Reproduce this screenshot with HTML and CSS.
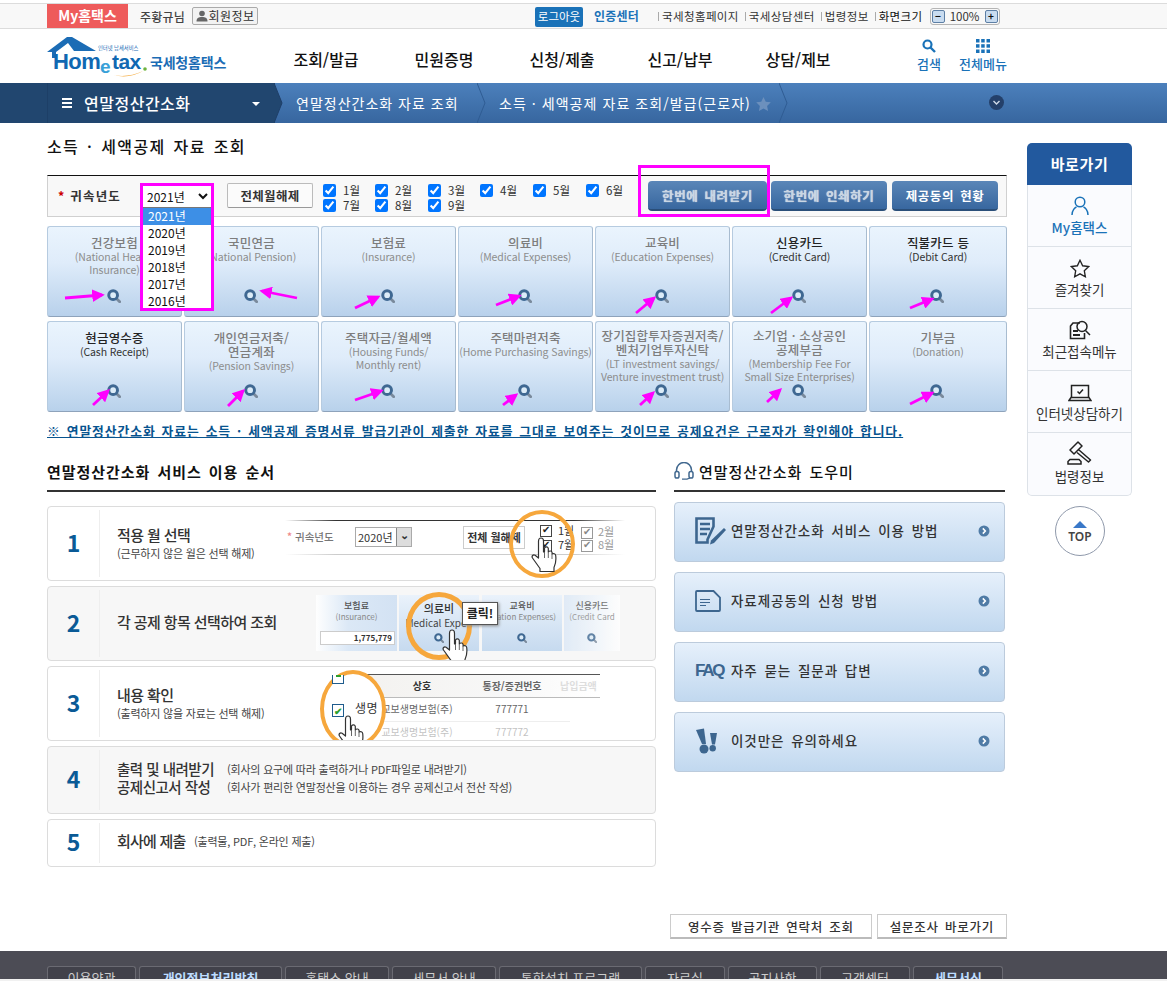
FILE: index.html
```html
<!DOCTYPE html>
<html lang="ko">
<head>
<meta charset="utf-8">
<title>소득·세액공제 자료 조회</title>
<link rel="stylesheet" href="styles.css">
</head>
<body>
<svg class="defs" width="0" height="0" aria-hidden="true">
  <symbol id="lens" viewBox="0 0 16 16">
    <path d="M10.500 10.500l4 4" stroke="#7a8a9c" stroke-width="3.200" stroke-linecap="round"/>
    <circle cx="7" cy="7" r="5" fill="#dcecf8" stroke="#3f6892" stroke-width="3.400"/>
  </symbol>
  <symbol id="hand" viewBox="0 0 30 38">
    <path d="M10 3c1.700 0 2.500 1.200 2.500 3v11l1-.4V13c1-1.600 3.300-1.400 3.800.3v3.500c1.200-1.300 3.300-1 3.800.7v1.500c1.400-.9 3.300-.3 3.600 1.500 .5 4 .2 8-1.700 12v4H9v-3L1.500 23c-1.200-1.700.6-4 2.600-2.800L7.500 23V6c0-1.800 1-3 2.500-3z" fill="#fff" stroke="#333" stroke-width="1.200" stroke-linejoin="round"/>
    <path d="M13.500 17v6M17.300 17v6M21 19v5" stroke="#555" stroke-width=".9" fill="none"/>
  </symbol>
  <symbol id="go" viewBox="0 0 12 12">
    <circle cx="6" cy="6" r="5.500" fill="#4f7ba6"/>
    <path d="M4.800 3.400L7.300 6 4.800 8.600" fill="none" stroke="#fff" stroke-width="1.600"/>
  </symbol>
</svg>

<header class="topbar">
  <div class="wrap topbar-in">
    <a class="my-tab">My홈택스</a>
    <span class="user">주황규님</span>
    <a class="member"><svg width="12" height="12" viewBox="0 0 12 12"><circle cx="6" cy="3.500" r="2.800" fill="#666"/><path d="M.5 11.500c0-3.500 2-4.500 5.500-4.500s5.500 1 5.500 4.500z" fill="#666"/></svg>회원정보</a>
    <div class="util">
      <a class="logout">로그아웃</a>
      <a class="cert">인증센터</a>
      <a class="ulink first">국세청홈페이지</a>
      <a class="ulink">국세상담센터</a>
      <a class="ulink">법령정보</a>
      <a class="ulink strong">화면크기</a>
      <div class="zoomer"><b class="zbtn">−</b><span>100%</span><b class="zbtn">+</b></div>
    </div>
  </div>
</header>

<div class="wrap mainnav">
  <a class="logo">
    <svg width="100" height="44" viewBox="0 0 100 44">
      <path d="M0 15L20 0h5l24 14H27L21 6 9 15v6H5v-6z" fill="#1b6cb5"/>
      <path d="M62 37q17 5 34-3q-15 9-34 3z" fill="#f4a93a"/>
      <text x="51" y="13" class="logo-small">인터넷 납세서비스</text>
      <text x="6" y="32" class="logo-main">Hom</text>
      <text x="53" y="36" class="logo-e">e</text>
      <text x="65" y="32" class="logo-main logo-tax">tax</text>
      <circle cx="98" cy="32" r="1.800" fill="#6fb33f"/>
    </svg>
    <span class="logo-name">국세청홈택스</span>
  </a>
  <nav class="gnb">
    <a>조회/발급</a><a>민원증명</a><a>신청/제출</a><a>신고/납부</a><a>상담/제보</a>
  </nav>
  <div class="navtools">
    <a class="tool tool-search">
      <svg width="14" height="14" viewBox="0 0 14 14"><circle cx="5.500" cy="5.500" r="4" fill="none" stroke="#1a72b8" stroke-width="2.200"/><path d="M8.500 8.500l4.500 4.500" stroke="#1a72b8" stroke-width="2.400"/></svg>
      <span>검색</span>
    </a>
    <a class="tool">
      <svg width="14" height="14" viewBox="0 0 14 14" fill="#1a72b8"><rect width="3.500" height="3.500"/><rect x="5.200" width="3.500" height="3.500"/><rect x="10.500" width="3.500" height="3.500"/><rect y="5.200" width="3.500" height="3.500"/><rect x="5.200" y="5.200" width="3.500" height="3.500"/><rect x="10.500" y="5.200" width="3.500" height="3.500"/><rect y="10.500" width="3.500" height="3.500"/><rect x="5.200" y="10.500" width="3.500" height="3.500"/><rect x="10.500" y="10.500" width="3.500" height="3.500"/></svg>
      <span>전체메뉴</span>
    </a>
  </div>
</div>

<div class="crumbbar">
  <div class="crumb-root">
    <span class="burger"><i></i><i></i><i></i></span>
    <strong>연말정산간소화</strong>
    <span class="caret"></span>
    <svg class="chev chev-root" width="9" height="40" viewBox="0 0 9 40"><path d="M0 0l8 20-8 20z" fill="#21466f"/><path d="M0 0l8 20-8 20" fill="none" stroke="#1e3f68"/></svg>
  </div>
  <a class="crumb crumb-a">연말정산간소화 자료 조회<svg class="chev" width="9" height="40" viewBox="0 0 9 40"><path d="M0 0l8 20-8 20" fill="none" stroke="#2f5c93"/></svg></a>
  <a class="crumb crumb-b">소득 · 세액공제 자료 조회/발급(근로자)
    <svg class="star" width="15" height="14" viewBox="0 0 24 23"><path d="M12 0l3.700 7.800 8.300 1-6.100 5.800 1.600 8.400L12 18.900 4.500 23l1.600-8.400L0 8.800l8.300-1z" fill="#6c90bd"/></svg>
    <svg class="chev" width="9" height="40" viewBox="0 0 9 40"><path d="M0 0l8 20-8 20" fill="none" stroke="#2f5c93"/></svg></a>
  <svg class="crumb-more" width="15" height="15" viewBox="0 0 15 15"><circle cx="7.500" cy="7.500" r="7.500" fill="#24406a"/><path d="M4.500 6l3 3 3-3" fill="none" stroke="#cfd9e6" stroke-width="1.400"/></svg>
</div>

<div class="wrap body-row">
  <main class="content">
    <h1 class="page-title">소득 · 세액공제 자료 조회</h1>

    <section class="filter">
      <label class="year-label"><em>*</em> 귀속년도</label>
      <div class="year-box">
        <select class="year-select"><option>2021년</option></select>
        <ul class="year-list">
          <li class="on">2021년</li><li>2020년</li><li>2019년</li><li>2018년</li><li>2017년</li><li>2016년</li>
        </ul>
      </div>
      <button class="btn-clear">전체월해제</button>
      <div class="months">
        <label><input type="checkbox" checked>1월</label>
        <label><input type="checkbox" checked>2월</label>
        <label><input type="checkbox" checked>3월</label>
        <label><input type="checkbox" checked>4월</label>
        <label><input type="checkbox" checked>5월</label>
        <label><input type="checkbox" checked>6월</label>
        <label><input type="checkbox" checked>7월</label>
        <label><input type="checkbox" checked>8월</label>
        <label><input type="checkbox" checked>9월</label>
      </div>
      <div class="actions">
        <span class="act-box"></span>
        <button class="act dim">한번에 내려받기</button>
        <button class="act dim">한번에 인쇄하기</button>
        <button class="act">제공동의 현황</button>
      </div>
    </section>

    <section class="cards">
      <a class="card dim"><b>건강보험</b><span>(National Health<br>Insurance)</span><svg class="lens"><use href="#lens"/></svg></a>
      <a class="card dim"><b>국민연금</b><span>(National Pension)</span><svg class="lens"><use href="#lens"/></svg></a>
      <a class="card dim"><b>보험료</b><span>(Insurance)</span><svg class="lens"><use href="#lens"/></svg></a>
      <a class="card dim"><b>의료비</b><span>(Medical Expenses)</span><svg class="lens"><use href="#lens"/></svg></a>
      <a class="card dim"><b>교육비</b><span>(Education Expenses)</span><svg class="lens"><use href="#lens"/></svg></a>
      <a class="card"><b>신용카드</b><span>(Credit Card)</span><svg class="lens"><use href="#lens"/></svg></a>
      <a class="card"><b>직불카드 등</b><span>(Debit Card)</span><svg class="lens"><use href="#lens"/></svg></a>
      <a class="card"><b>현금영수증</b><span>(Cash Receipt)</span><svg class="lens"><use href="#lens"/></svg></a>
      <a class="card dim"><b>개인연금저축/<br>연금계좌</b><span>(Pension Savings)</span><svg class="lens"><use href="#lens"/></svg></a>
      <a class="card dim"><b>주택자금/월세액</b><span>(Housing Funds/<br>Monthly rent)</span><svg class="lens"><use href="#lens"/></svg></a>
      <a class="card dim"><b>주택마련저축</b><span>(Home Purchasing Savings)</span><svg class="lens"><use href="#lens"/></svg></a>
      <a class="card dim tight"><b>장기집합투자증권저축/<br>벤처기업투자신탁</b><span>(LT investment savings/<br>Venture investment trust)</span><svg class="lens"><use href="#lens"/></svg></a>
      <a class="card dim tight"><b>소기업 · 소상공인<br>공제부금</b><span>(Membership Fee For<br>Small Size Enterprises)</span><svg class="lens"><use href="#lens"/></svg></a>
      <a class="card dim"><b>기부금</b><span>(Donation)</span><svg class="lens"><use href="#lens"/></svg></a>
      <svg class="arrows" width="960" height="186" viewBox="47 226 960 186">
        <defs><marker id="ah" markerWidth="4.500" markerHeight="4.500" refX="3.500" refY="2.250" orient="auto"><path d="M0 0L4.500 2.250 0 4.500z" fill="#ff00ff"/></marker></defs>
        <g stroke="#ff00ff" stroke-width="2.800" fill="none">
          <path d="M65 298L102 295" marker-end="url(#ah)"/>
          <path d="M297 298L262 291" marker-end="url(#ah)"/>
          <path d="M355 308L378 297" marker-end="url(#ah)"/>
          <path d="M496 305L519 296" marker-end="url(#ah)"/>
          <path d="M636 313L654 298" marker-end="url(#ah)"/>
          <path d="M771 313L791 298" marker-end="url(#ah)"/>
          <path d="M910 308L932 299" marker-end="url(#ah)"/>
          <path d="M93 405L108 391" marker-end="url(#ah)"/>
          <path d="M228 406L243 391" marker-end="url(#ah)"/>
          <path d="M355 400L381 391" marker-end="url(#ah)"/>
          <path d="M503 405L516 395" marker-end="url(#ah)"/>
          <path d="M640 405L653 393" marker-end="url(#ah)"/>
          <path d="M767 402L780 390" marker-end="url(#ah)"/>
          <path d="M910 404L932 393" marker-end="url(#ah)"/>
        </g>
      </svg>
    </section>

    <p class="notice">※ 연말정산간소화 자료는 소득 · 세액공제 증명서류 발급기관이 제출한 자료를 그대로 보여주는 것이므로 공제요건은 근로자가 확인해야 합니다.</p>

    <div class="columns">
      <section class="col-left">
        <h2 class="sec-title">연말정산간소화 서비스 이용 순서</h2>
        <ol class="steps">
          <li class="step s1">
            <span class="num">1</span>
            <div class="step-text"><b>적용 월 선택</b><small>(근무하지 않은 월은 선택 해제)</small></div>
            <div class="ill ill1">
              <span class="i-line i-top"></span><span class="i-line i-bot"></span>
              <span class="i-lab"><em>*</em> 귀속년도</span>
              <span class="i-sel">2020년<u>⌄</u></span>
              <span class="i-clear">전체 월해제</span>
              <span class="i-chk c1"></span><span class="i-chk c2"></span>
              <span class="i-m m1">1월</span><span class="i-m m2">7월</span>
              <span class="i-chk c3"></span><span class="i-chk c4"></span>
              <span class="i-m m3">2월</span><span class="i-m m4">8월</span>
              <span class="ring r1"></span>
              <svg class="hand h1"><use href="#hand"/></svg>
            </div>
          </li>
          <li class="step s2 alt">
            <span class="num">2</span>
            <div class="step-text"><b>각 공제 항목 선택하여 조회</b></div>
            <div class="ill ill2">
              <div class="t t1"><b>보험료</b><i>(Insurance)</i><span class="amt">1,775,779</span></div>
              <div class="t t2"><b>의료비</b><i>Medical Expen</i><svg class="tl"><use href="#lens"/></svg></div>
              <div class="t t3"><b>교육비</b><i>ucation Expenses)</i><svg class="tl"><use href="#lens"/></svg></div>
              <div class="t t4"><b>신용카드</b><i>(Credit Card</i><svg class="tl"><use href="#lens"/></svg></div>
              <span class="ring r2"></span>
              <span class="tip">클릭!</span>
              <svg class="hand h2"><use href="#hand"/></svg>
            </div>
          </li>
          <li class="step s3">
            <span class="num">3</span>
            <div class="step-text"><b>내용 확인</b><small>(출력하지 않을 자료는 선택 해제)</small></div>
            <div class="ill ill3">
              <div class="tb-head"><span>상호</span><span>통장/증권번호</span><span class="fade">납입금액</span></div>
              <div class="tb-row r-a"><span>교보생명보험(주)</span><span>777771</span></div>
              <div class="tb-row r-b"><span>교보생명보험(주)</span><span>777772</span></div>
              <span class="ring r3"></span>
              <span class="ck ck1"></span>
              <span class="ck ck2">✔</span>
              <span class="mag-t">생명</span>
              <svg class="hand h3"><use href="#hand"/></svg>
            </div>
          </li>
          <li class="step s4 alt">
            <span class="num">4</span>
            <div class="step-text two">
              <div><b>출력 및 내려받기</b><small>(회사의 요구에 따라 출력하거나 PDF파일로 내려받기)</small></div>
              <div><b>공제신고서 작성</b><small>(회사가 편리한 연말정산을 이용하는 경우 공제신고서 전산 작성)</small></div>
            </div>
          </li>
          <li class="step s5">
            <span class="num">5</span>
            <div class="step-text inline"><b>회사에 제출</b><small>(출력물, PDF, 온라인 제출)</small></div>
          </li>
        </ol>
      </section>

      <section class="col-right">
        <h2 class="sec-title help">
          <svg width="20" height="18" viewBox="0 0 20 18"><path d="M2.500 10V8a7.500 7.500 0 0 1 15 0v2" fill="none" stroke="#41688f" stroke-width="1.500"/><rect x="1" y="9.500" width="4" height="6.500" rx="1.800" fill="none" stroke="#41688f" stroke-width="1.500"/><rect x="15" y="9.500" width="4" height="6.500" rx="1.800" fill="none" stroke="#41688f" stroke-width="1.500"/><path d="M16 16l-3 1.200H8" fill="none" stroke="#41688f" stroke-width="1.300"/></svg>
          연말정산간소화 도우미
        </h2>
        <a class="helpbtn">
          <svg class="hi" width="32" height="28" viewBox="0 0 32 28"><path d="M1.500 1.500h17v8l-6 13v3h-11z" fill="none" stroke="#3d668f" stroke-width="2.600"/><path d="M5 7h10M5 12h10M5 17h7" stroke="#3d668f" stroke-width="2.400"/><path d="M29 11l2 2-12 13-4 1.500 1-4z" fill="#3d668f"/></svg>
          <span>연말정산간소화 서비스 이용 방법</span><svg class="gobtn"><use href="#go"/></svg>
        </a>
        <a class="helpbtn">
          <svg class="hi" width="32" height="22" viewBox="0 0 32 22"><path d="M2 1h16.500L25 7.500V20a1 1 0 0 1-1 1H2a1 1 0 0 1-1-1V2a1 1 0 0 1 1-1z" fill="none" stroke="#3d668f" stroke-width="1.800"/><path d="M5 9.500h10M5 12.500h10M5 15.500h6" stroke="#3d668f" stroke-width="1.100"/></svg>
          <span>자료제공동의 신청 방법</span><svg class="gobtn"><use href="#go"/></svg>
        </a>
        <a class="helpbtn">
          <span class="faq">FAQ</span>
          <span>자주 묻는 질문과 답변</span><svg class="gobtn"><use href="#go"/></svg>
        </a>
        <a class="helpbtn">
          <svg class="hi" width="32" height="26" viewBox="0 0 32 26"><path d="M1 2l8-1.500L11 16H7z" fill="#3d668f"/><circle cx="9" cy="21" r="4.500" fill="#3d668f"/><path d="M15 5h7l-2 11.500h-3z" fill="#3d668f"/><circle cx="17.700" cy="20.300" r="3.200" fill="#3d668f"/></svg>
          <span>이것만은 유의하세요</span><svg class="gobtn"><use href="#go"/></svg>
        </a>
      </section>
    </div>

    <div class="bottom-btns">
      <button class="gray-btn">영수증 발급기관 연락처 조회</button>
      <button class="gray-btn">설문조사 바로가기</button>
    </div>
  </main>

  <aside class="side">
    <div class="side-head">바로가기</div>
    <ul class="side-list">
      <li class="blue"><svg width="18" height="20" viewBox="0 0 18 20"><circle cx="9" cy="6" r="4.800" fill="none" stroke="#1a72b8" stroke-width="1.500"/><path d="M1 19c0-5 3-7.500 4.500-8M17 19c0-5-3-7.500-4.500-8" fill="none" stroke="#1a72b8" stroke-width="1.500"/></svg><span>My홈택스</span></li>
      <li><svg width="20" height="19" viewBox="0 0 24 23"><path d="M12 1.500l3.200 6.700 7.300 1-5.300 5 1.300 7.300L12 18l-6.500 3.500 1.300-7.300-5.300-5 7.300-1z" fill="none" stroke="#222" stroke-width="1.600"/></svg><span>즐겨찾기</span></li>
      <li><svg width="22" height="20" viewBox="0 0 22 20"><path d="M11 3H4L1.500 6v12.500h14V13" fill="none" stroke="#222" stroke-width="1.600"/><circle cx="13" cy="6.500" r="5" fill="none" stroke="#222" stroke-width="1.500"/><path d="M16.500 10.500l4.500 4.500" stroke="#222" stroke-width="1.500"/><path d="M4 11h5M4 15h7" stroke="#222" stroke-width="1.800"/></svg><span>최근접속메뉴</span></li>
      <li><svg width="24" height="18" viewBox="0 0 24 18"><path d="M3.500 13V1.500h17V13" fill="none" stroke="#222" stroke-width="1.500"/><path d="M1 16.500l2-3h18l2 3z" fill="none" stroke="#222" stroke-width="1.500"/><path d="M9.500 7.500l2 2 3.500-4" fill="none" stroke="#222" stroke-width="1.500"/></svg><span>인터넷상담하기</span></li>
      <li><svg width="26" height="24" viewBox="0 0 26 24"><path d="M3 9l8-8 4 4-8 8z M12 9l11.500 10-2 2L10 11.500" fill="none" stroke="#222" stroke-width="1.500" stroke-linejoin="round"/><path d="M1 23h13v-2.500l-2-2H3l-2 2z" fill="none" stroke="#222" stroke-width="1.500"/></svg><span>법령정보</span></li>
    </ul>
    <a class="top-btn"><i></i>TOP</a>
  </aside>
</div>

<footer class="footer">
  <nav class="foot-tabs">
    <a>이용약관</a><a class="hl">개인정보처리방침</a><a>홈택스 안내</a><a>세무서 안내</a><a>통합설치 프로그램</a><a>자료실</a><a>공지사항</a><a>고객센터</a><a class="hl">세무서식</a>
  </nav>
</footer>
</body>
</html>
```
FILE: styles.css
```css
* { box-sizing: border-box; }
html, body { margin: 0; padding: 0; height: 981px; overflow: hidden; }
body { background: #fff; color: #222; font: 12px/1.3 "Noto Sans CJK KR", "Liberation Sans", sans-serif; }
a { color: inherit; text-decoration: none; }
ul, ol { list-style: none; margin: 0; padding: 0; }
button { font-family: inherit; cursor: pointer; }
.defs { position: absolute; }
.wrap { width: 960px; margin-left: 47px; }

/* top bar */
.topbar { margin-top: 3px; height: 26px; background: #f8f8f8; border-top: 1px solid #dcdcdc; border-bottom: 1px solid #dcdcdc; }
.topbar-in { display: flex; align-items: flex-end; height: 24px; }
.my-tab { width: 81px; height: 24px; background: #ee5b5b; color: #fff; font-size: 14px; font-weight: 700; line-height: 23px; text-align: center; }
.user { margin-left: 12px; width: 46px; font-size: 12px; font-weight: 500; color: #444; line-height: 22px; white-space: nowrap; letter-spacing: .2px; }
.member { margin-left: 6px; margin-bottom: 3px; height: 18px; width: 66px; border: 1px solid #aaa; border-radius: 2px; background: #f2f2f2; color: #333; font-size: 12px; letter-spacing: .4px; display: flex; align-items: center; justify-content: center; gap: 1px; white-space: nowrap; }
.util { margin-left: auto; height: 24px; width: 472px; display: flex; align-items: center; font-size: 11.500px; color: #333; }
.logout { width: 48px; height: 20px; margin-top: 1px; background: #1a72b8; border-radius: 2px; color: #fff; line-height: 19px; text-align: center; white-space: nowrap; }
.cert { margin-left: 11px; color: #1a72b8; font-weight: 700; font-size: 12px; white-space: nowrap; letter-spacing: .2px; }
.ulink { margin-left: 6px; padding-left: 0; white-space: nowrap; letter-spacing: .4px; }
.ulink::before { content: ""; display: inline-block; width: 1px; height: 9px; background: #aaa; margin-right: 3px; }
.ulink.first { margin-left: 19px; }
.ulink.strong { color: #111; }
.zoomer { margin-left: 7px; width: 70px; height: 17px; border: 1px solid #b5b5b5; border-radius: 3px; display: flex; align-items: center; justify-content: space-between; padding: 0 1px; font-size: 11.500px; }
.zbtn { width: 13px; height: 13px; border: 1px solid #5d7fa5; border-radius: 2px; background: #c9dcf0; font-size: 10px; line-height: 10px; text-align: center; color: #111; }

/* main nav */
.mainnav { height: 54px; display: flex; align-items: flex-start; }
.logo { width: 180px; height: 54px; padding-top: 8px; display: flex; position: relative; flex: none; }
.logo svg { flex: none; overflow: visible; }
.logo-small { font: 5.300px "Noto Sans CJK KR", sans-serif; fill: #1b6cb5; }
.logo-main { font: 700 22px "Liberation Sans", sans-serif; fill: #1068b2; letter-spacing: -.6px; }
.logo-tax { font-size: 21px; }
.logo-e { font: 700 19px "Liberation Sans", sans-serif; fill: #38a1d8; }
.logo-name { position: absolute; left: 103px; top: 24px; color: #1b6cb5; font-size: 14px; font-weight: 700; letter-spacing: -.2px; white-space: nowrap; }
.gnb { margin-left: 40px; display: flex; height: 54px; flex: none; }
.gnb a { width: 118px; text-align: center; font-size: 16px; font-weight: 500; line-height: 60px; color: #111; white-space: nowrap; }
.navtools { margin-left: 48px; display: flex; gap: 0; padding-top: 10px; }
.tool { display: flex; flex-direction: column; align-items: center; color: #1a72b8; font-size: 13px; font-weight: 500; line-height: 14px; gap: 4px; white-space: nowrap; width: 60px; }
.tool-search { width: 48px; }

/* breadcrumb */
.crumbbar { height: 40px; background: linear-gradient(#4c80bc, #37669f); display: flex; align-items: center; position: relative; color: #fff; }
.crumb-root { width: 275px; height: 40px; padding-left: 62px; background: #21466f; display: flex; align-items: center; position: relative; flex: none; }
.crumb-root::before { content: ""; position: absolute; left: 47px; top: 0; bottom: 0; width: 1px; background: #1d3f67; }
.burger { width: 10px; display: flex; flex-direction: column; gap: 2px; margin-right: 12px; }
.burger i { display: block; height: 2px; background: #fff; }
.crumb-root strong { font-size: 16px; font-weight: 500; letter-spacing: .5px; white-space: nowrap; }
.caret { margin-left: 61px; border-top: 4px solid #fff; border-left: 4px solid transparent; border-right: 4px solid transparent; margin-top: 2px; }
.chev { position: absolute; right: -8px; top: 0; }
.chev-root { right: -8px; }
.crumb { position: relative; height: 40px; line-height: 40px; font-size: 14px; white-space: nowrap; flex: none; }
.crumb-a { width: 203px; padding-left: 21px; letter-spacing: 1px; }
.crumb-b { width: 302px; padding-left: 21px; letter-spacing: 1.050px; }
.star { vertical-align: -2px; }
.crumb-more { position: absolute; left: 989px; top: 12px; }

/* layout */
.body-row { display: flex; gap: 20px; width: 1085px; }
.content { width: 960px; flex: none; }
.page-title { margin: 13px 0 0; font-size: 16px; font-weight: 500; line-height: 20px; letter-spacing: 1.400px; color: #111; word-spacing: 2px; }

/* filter */
.filter { margin-top: 19px; height: 42px; background: #f8f8f8; border: 1px solid #d0d0d0; border-top: 1px solid #111; display: flex; align-items: center; position: relative; }
.year-label { margin-left: 10px; width: 83px; font-size: 12.500px; font-weight: 700; color: #333; letter-spacing: 1.200px; white-space: nowrap; }
.year-label em { color: #c00; font-style: normal; }
.year-box { width: 74px; height: 128px; position: absolute; left: 92px; top: 7px; border: 3px solid #ff00ff; z-index: 5; background: #fff; }
.year-select { width: 68px; height: 21px; border: 0; background: #fff; font: 12px "Noto Sans CJK KR", sans-serif; color: #111; display: block; padding: 0; }
.year-list { border-top: 1px solid #777; }
.year-list li { height: 17px; line-height: 16px; font-size: 12px; padding-left: 5px; color: #111; }
.year-list li.on { background: #3d8fe6; color: #fff; }
.btn-clear { position: absolute; left: 179px; top: 7px; width: 86px; height: 25px; border: 1px solid #bbb; border-bottom-color: #999; border-radius: 2px; background: #fbfbfb; font-size: 12.500px; font-weight: 700; color: #333; letter-spacing: .3px; padding: 0; white-space: nowrap; }
.months { position: absolute; left: 275px; top: 7px; width: 320px; display: grid; grid-template-columns: 52px 53px 52px 53px 53px 52px; row-gap: 0; }
.months label { display: flex; align-items: center; font-size: 11.500px; color: #333; height: 15px; white-space: nowrap; }
.months input { width: 13px; height: 13px; margin: 0 7px 0 0; accent-color: #0075ff; }
.actions { position: absolute; left: 600px; top: 5px; display: flex; gap: 4px; }
.act { height: 30px; width: 119px; border: 0; border-bottom: 2px solid #2a4e78; border-radius: 4px; background: linear-gradient(#5a86b8, #38679f); color: #fff; font-size: 12.500px; font-weight: 700; letter-spacing: .6px; word-spacing: 2px; padding: 0; white-space: nowrap; }
.act:nth-of-type(2) { width: 116px; }
.act:nth-of-type(3) { width: 106px; margin-left: 1px; }
.act.dim { color: #c9d6e4; text-shadow: 0 0 1px #eee; }
.act-box { position: absolute; left: -10px; top: -16px; width: 132px; height: 52px; border: 3px solid #ff00ff; z-index: 3; pointer-events: none; }

/* cards */
.cards { margin-top: 9px; display: grid; grid-template-columns: repeat(6, 135px) 138px; grid-auto-rows: 91px; column-gap: 2px; row-gap: 4px; position: relative; }
.card { border: 1px solid #b6cbe0; border-bottom-color: #8ea3bb; border-right-color: #a8bcd0; border-radius: 3px; background: linear-gradient(#eaf4fd 0, #dfecfa 40%, #b8d1eb 100%); text-align: center; padding-top: 9px; display: flex; flex-direction: column; align-items: center; position: relative; color: #222; }
.card b { font-size: 12.500px; font-weight: 500; line-height: 14px; letter-spacing: .2px; white-space: nowrap; }
.card span { font-size: 10.500px; line-height: 12.500px; margin-top: 1px; white-space: nowrap; color: #333; letter-spacing: -.1px; }
.card.dim b { color: #7d7d7d; }
.card.dim span { color: #8d8d8d; }
.card.tight { padding-top: 7px; }
.lens { position: absolute; left: 50%; margin-left: -8px; bottom: 13px; width: 14px; height: 14px; }
.arrows { position: absolute; left: 0; top: 0; pointer-events: none; z-index: 2; }

.notice { margin: 12px 0 0; font-size: 12.800px; font-weight: 700; line-height: 14px; color: #07548f; text-decoration: underline; letter-spacing: .92px; word-spacing: 1.500px; white-space: nowrap; }

/* columns */
.columns { margin-top: 24px; display: flex; gap: 18px; }
.col-left { width: 609px; flex: none; }
.col-right { width: 331px; flex: none; }
.sec-title { margin: 0; height: 30px; border-bottom: 2px solid #333; font-size: 15px; font-weight: 700; line-height: 20px; letter-spacing: .95px; word-spacing: 2px; color: #111; white-space: nowrap; }
.sec-title.help { display: flex; align-items: flex-start; gap: 5px; font-weight: 500; }
.steps { margin-top: 14px; display: flex; flex-direction: column; gap: 5px; }
.step { border: 1px solid #dcdcdc; border-radius: 4px; display: flex; align-items: center; position: relative; overflow: hidden; background: #fff; }
.step.alt { background: #f7f7f7; }
.s1, .s2, .s3 { height: 75px; }
.s4 { height: 68px; }
.s5 { height: 48px; }
.num { width: 52px; flex: none; align-self: stretch; margin: 3px 0; border-right: 1px solid #eee; display: flex; align-items: center; justify-content: center; padding-bottom: 2px; color: #0a5a96; font-size: 23px; font-weight: 700; }
.step-text { margin-left: 17px; margin-top: -4px; color: #333; display: flex; flex-direction: column; }
.step-text b { font-size: 15px; font-weight: 500; line-height: 22px; white-space: nowrap; letter-spacing: -.6px; word-spacing: 0; }
.step-text small { font-size: 11px; color: #444; line-height: 14px; letter-spacing: -.2px; white-space: nowrap; }
.step-text.two > div { display: flex; align-items: center; height: 18px; }
.step-text.two b { width: 110px; font-size: 14.500px; letter-spacing: -.5px; word-spacing: 0; }
.step-text.inline { flex-direction: row; align-items: center; }
.step-text.inline b { font-size: 15px; width: 77px; letter-spacing: -.8px; }

/* illustrations */
.ill { position: absolute; top: 0; bottom: 0; left: 225px; right: 0; font-size: 11px; }
.ring { position: absolute; border: 4px solid #f6a73c; border-radius: 50%; }
.hand { position: absolute; width: 30px; height: 38px; }
.i-line { position: absolute; left: 12px; width: 340px; height: 1px; }
.i-top { top: 13px; background: linear-gradient(90deg, transparent, #333 15%, #333 85%, transparent); }
.i-bot { top: 47px; background: linear-gradient(90deg, transparent, #ccc 15%, #ccc 85%, transparent); }
.i-lab { position: absolute; left: 14px; top: 23px; color: #777; font-size: 10.500px; font-weight: 500; white-space: nowrap; }
.i-lab em { color: #e88; font-style: normal; }
.i-sel { position: absolute; left: 82px; top: 20px; width: 57px; height: 20px; border: 1px solid #aaa; background: #fff; font-size: 11px; padding-left: 2px; line-height: 18px; color: #333; }
.i-sel u { position: absolute; right: 0; top: 0; width: 15px; height: 18px; border-left: 1px solid #888; background: #ddd; text-decoration: none; text-align: center; line-height: 12px; font-weight: 700; }
.i-clear { position: absolute; left: 190px; top: 19px; width: 62px; height: 23px; border: 1px solid #ccc; background: #fff; font-size: 11px; font-weight: 700; line-height: 20px; text-align: center; white-space: nowrap; color: #333; }
.i-chk { position: absolute; width: 12px; height: 12px; border: 1px solid #444; background: #fff; }
.i-chk::after { content: "✔"; position: absolute; left: 1px; top: -4px; font-size: 10px; color: #222; }
.c1 { left: 267px; top: 18px; } .c2 { left: 267px; top: 33px; }
.c3 { left: 308px; top: 20px; border-color: #999; } .c4 { left: 308px; top: 33px; border-color: #999; }
.c3::after, .c4::after { color: #888; }
.i-m { position: absolute; font-size: 11px; color: #333; }
.m1 { left: 285px; top: 16px; } .m2 { left: 285px; top: 30px; }
.m3 { left: 325px; top: 17px; color: #999; } .m4 { left: 325px; top: 30px; color: #999; }
.r1 { left: 236px; top: 3px; width: 66px; height: 68px; }
.h1 { left: 258px; top: 28px; }

.t { position: absolute; top: 8px; height: 56px; width: 80px; background: linear-gradient(#eaf2fb, #c6daef); text-align: center; padding-top: 5px; display: flex; flex-direction: column; align-items: center; }
.t b { font-size: 9px; font-weight: 500; line-height: 11px; color: #555; }
.t i { font-style: normal; font-size: 8px; color: #888; white-space: nowrap; overflow: hidden; width: 100%; line-height: 11px; }
.t1 { left: 43px; width: 81px; background: linear-gradient(90deg, rgba(255,255,255,.9), #dbe8f6 40%, #d3e2f3); }
.t2 { left: 126px; } .t3 { left: 209px; }
.t4 { left: 291px; width: 56px; background: linear-gradient(90deg, #dbe8f6, #fff); opacity: .8; }
.t2 b { font-size: 11px; color: #333; margin-top: 3px; }
.t2 i { font-size: 10px; color: #444; margin-top: 3px; line-height: 12px; }
.tl { position: absolute; bottom: 8px; left: 50%; margin-left: -5px; width: 10px; height: 10px; }
.amt { position: absolute; left: 4px; right: 2px; bottom: 6px; height: 14px; background: #fff; border: 1px solid #ccc; font-size: 8px; font-weight: 700; text-align: right; color: #333; line-height: 12px; padding-right: 2px; }
.r2 { left: 133px; top: 5px; width: 66px; height: 68px; border-width: 5px; }
.tip { position: absolute; left: 189px; top: 15px; width: 36px; height: 23px; background: #fff; border: 1px solid #555; box-shadow: 1px 1px 3px #888; font-size: 12px; font-weight: 700; line-height: 20px; text-align: center; color: #222; }
.h2 { left: 169px; top: 40px; }

.tb-head { position: absolute; left: 67px; top: 7px; width: 260px; height: 24px; border-top: 1px solid #555; border-bottom: 1px solid #bbb; background: linear-gradient(90deg, #f3f1ee, #f7f7f7 60%, #fff); display: flex; font-size: 10px; font-weight: 700; line-height: 22px; color: #333; }
.tb-head span:nth-child(1) { width: 140px; text-align: center; padding-left: 24px; }
.tb-head span:nth-child(2) { width: 64px; text-align: center; white-space: nowrap; color: #666; }
.tb-head .fade { color: #ddd; padding-left: 16px; white-space: nowrap; }
.tb-row { position: absolute; left: 67px; width: 230px; height: 24px; display: flex; font-size: 10px; line-height: 22px; color: #666; border-bottom: 1px solid #eee; }
.tb-row span:nth-child(1) { width: 140px; text-align: center; padding-left: 14px; white-space: nowrap; }
.tb-row span:nth-child(2) { width: 64px; text-align: center; }
.r-a { top: 31px; } .r-b { top: 54px; opacity: .4; }
.r3 { left: 47px; top: 3px; width: 66px; height: 78px; background: #fff; border-width: 4px; }
.ck { position: absolute; width: 12px; height: 13px; border: 1px solid #1f5c8d; background: #fff; color: #2ca02c; font-size: 10px; font-weight: 700; line-height: 11px; text-align: center; }
.ck1 { left: 59px; top: 8px; height: 9px; border-top: 0; }
.ck1::after { content: ""; display: block; width: 5px; height: 2px; margin: 0 auto; background: #2ca02c; }
.ck2 { left: 59px; top: 37px; }
.mag-t { position: absolute; left: 82px; top: 33px; font-size: 12px; color: #333; letter-spacing: .5px; }
.h3 { left: 65px; top: 46px; }

/* helpers */
.col-right .sec-title.help { margin-bottom: 10px; }
.helpbtn { height: 60px; margin-bottom: 10px; border: 1px solid #bccbdc; border-radius: 4px; background: linear-gradient(#e6f0fb, #c1d8ef); display: flex; align-items: center; padding: 0 0 3px 20px; font-size: 13.500px; font-weight: 500; color: #333; letter-spacing: .95px; word-spacing: 2px; position: relative; white-space: nowrap; }
.hi { flex: none; margin-right: 4px; }
.faq { width: 32px; margin-right: 4px; font: 700 17px "Liberation Sans", sans-serif; color: #3d668f; letter-spacing: -2.200px; }
.gobtn { position: absolute; right: 14px; top: 22px; width: 12px; height: 12px; }

.bottom-btns { margin-top: 47px; display: flex; justify-content: flex-end; gap: 5px; }
.gray-btn { height: 25px; border: 1px solid #ccc; border-bottom: 2px solid #bbb; background: #fff; font-size: 12.500px; font-weight: 500; color: #333; padding: 0; letter-spacing: .75px; word-spacing: 2px; white-space: nowrap; }
.gray-btn:first-child { width: 202px; }
.gray-btn:last-child { width: 130px; }

/* side */
.side { width: 105px; flex: none; margin-top: 20px; }
.side-head { height: 42px; background: #22599e; border-radius: 5px 5px 0 0; color: #fff; font-size: 15px; font-weight: 700; text-align: center; line-height: 42px; letter-spacing: .6px; }
.side-list { border: 1px solid #dde2e8; border-top: 0; border-radius: 0 0 5px 5px; background: #fafbfe; }
.side-list li { height: 62px; border-bottom: 1px solid #dde2e8; display: flex; flex-direction: column; align-items: center; justify-content: flex-end; padding-bottom: 9px; gap: 3px; font-size: 13.500px; color: #333; white-space: nowrap; }
.side-list li:last-child { border-bottom: 0; height: 62px; }
.side-list li.blue { color: #1a72b8; font-weight: 500; }
.top-btn { display: flex; flex-direction: column; align-items: center; justify-content: center; width: 50px; height: 50px; margin: 10px 0 0 28px; border: 1px solid #8f99ab; border-radius: 50%; background: #fff; font: 600 12px "Noto Sans", sans-serif; color: #444; line-height: 14px; gap: 2px; padding-top: 2px; }
.top-btn i { border-bottom: 7px solid #3a78c8; border-left: 7px solid transparent; border-right: 7px solid transparent; }

/* footer */
.footer { position: absolute; left: 0; right: 0; top: 951px; height: 30px; background: #4c4c55; overflow: hidden; border-bottom: 2px solid #f1f1f1; }
.foot-tabs { position: absolute; top: 15px; left: 47px; display: flex; gap: 3px; }
.foot-tabs a { height: 30px; border: 1px solid #6a6a72; border-bottom: 0; border-radius: 3px 3px 0 0; background: #41414a; color: #ccc; font-size: 13px; line-height: 22px; text-align: center; white-space: nowrap; }
.foot-tabs a:nth-child(1) { width: 89px; }
.foot-tabs a:nth-child(2) { width: 143px; }
.foot-tabs a:nth-child(3) { width: 104px; }
.foot-tabs a:nth-child(4) { width: 104px; }
.foot-tabs a:nth-child(5) { width: 143px; }
.foot-tabs a:nth-child(6) { width: 80px; }
.foot-tabs a:nth-child(7) { width: 89px; }
.foot-tabs a:nth-child(8) { width: 90px; }
.foot-tabs a:nth-child(9) { width: 90px; }
.foot-tabs a.hl { color: #bcdcff; font-weight: 700; }
```
